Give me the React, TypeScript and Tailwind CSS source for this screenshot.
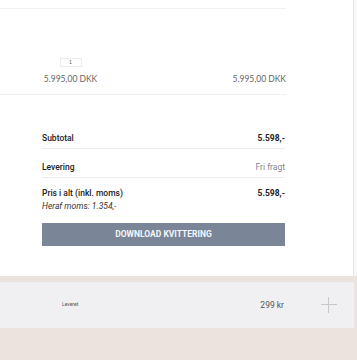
const ROWS = [
  { label: 'Subtotal', value: '5.598,-', muted: false },
  { label: 'Levering', value: 'Fri fragt', muted: true },
];

export default function App() {
  return (
    <div className="w-[357px] h-[360px] bg-[#ebe3de] flex flex-col overflow-hidden" style={{ fontFamily: 'Roboto, sans-serif' }}>
      <div className="flex h-[276px]">
        <div className="w-[354px] bg-white border-r border-[#e4e4e4] flex flex-col">
          <div className="mt-[8px] w-[286px] h-px bg-[#f1f1f1]" />
          <div className="w-[286px] flex items-end justify-between pl-[44px] pt-[47px] h-[75px]" style={{ fontFamily: 'Lato, sans-serif' }}>
            <div className="flex flex-col items-center w-[53px]">
              <div className="w-[22px] h-[9px] border border-[#ececec] text-[5px] leading-[7px] text-center text-[#555]">1</div>
              <span className="mt-[7px] text-[8.5px] leading-[10px] text-[#666] whitespace-nowrap">5.995,00 DKK</span>
            </div>
            <span className="text-[8.5px] leading-[10px] text-[#666] whitespace-nowrap">5.995,00 DKK</span>
          </div>
          <div className="mt-[10px] w-[286px] h-px bg-[#f1f1f1]" />
          <div className="ml-[42px] w-[243px] mt-[25px] flex flex-col text-[8.5px] text-[#222]">
            {ROWS.map((r) => (
              <div key={r.label} className="flex justify-between items-end h-[29px] pb-[5px] leading-[10px] border-b border-[#ececec]">
                <span className="font-medium">{r.label}</span>
                <span className={r.muted ? 'text-[#7f8793]' : 'font-bold'}>{r.value}</span>
              </div>
            ))}
            <div className="flex justify-between pt-[9px] leading-[13px]">
              <span className="font-medium">Pris i alt (inkl. moms)</span>
              <span className="font-bold">5.598,-</span>
            </div>
            <span className="italic text-[#333] leading-[13px]">Heraf moms: 1.354,-</span>
            <button className="mt-[10px] h-[23px] w-full bg-[#7a8697] text-[#f3f5f8] font-bold text-[8.5px] uppercase">
              Download kvittering
            </button>
          </div>
        </div>
        <div className="flex-1 bg-[#f7f7f7]" />
      </div>
      <div className="mt-[6px] h-[46px] w-[354px] bg-[#f0f0f2] flex items-center">
        <span className="ml-[62px] text-[5px] text-[#555]">Leveret</span>
        <span className="ml-auto text-[8.5px] text-[#555]">299 kr</span>
        <div className="ml-[37px] mr-[17px] relative w-[16px] h-[16px]">
          <div className="absolute left-0 right-0 top-[7px] h-px bg-[#c8c6c6]" />
          <div className="absolute top-0 bottom-0 left-[7px] w-px bg-[#c8c6c6]" />
        </div>
      </div>
    </div>
  );
}
